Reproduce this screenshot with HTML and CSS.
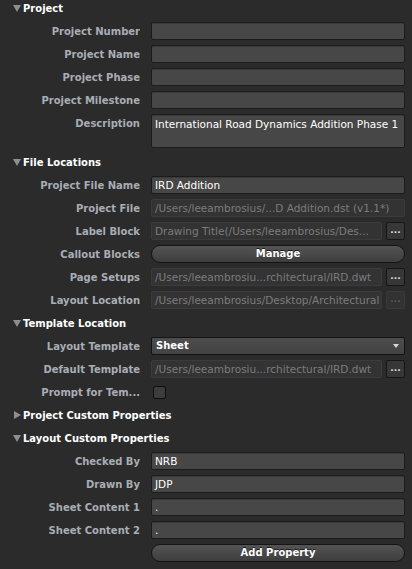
FILE: index.html
```html
<!DOCTYPE html>
<html>
<head>
<meta charset="utf-8">
<link rel="stylesheet" href="styles.css">
</head>
<body>
<div class="panel">
  <div class="sec-head first"><span class="tri down"></span>Project</div>
  <div class="row"><div class="lbl">Project Number</div><div class="field"></div></div>
  <div class="row"><div class="lbl">Project Name</div><div class="field"></div></div>
  <div class="row"><div class="lbl">Project Phase</div><div class="field"></div></div>
  <div class="row"><div class="lbl">Project Milestone</div><div class="field"></div></div>
  <div class="row top"><div class="lbl">Description</div><div class="field tall">International Road Dynamics Addition Phase 1</div></div>

  <div class="sec-head"><span class="tri down"></span>File Locations</div>
  <div class="row"><div class="lbl">Project File Name</div><div class="field">IRD Addition</div></div>
  <div class="row"><div class="lbl">Project File</div><div class="field off">/Users/leeambrosius/...D Addition.dst (v1.1*)</div></div>
  <div class="row"><div class="lbl">Label Block</div><div class="combo"><div class="field off">Drawing Title(/Users/leeambrosius/Des...</div><div class="dots">...</div></div></div>
  <div class="row"><div class="lbl">Callout Blocks</div><div class="pill">Manage</div></div>
  <div class="row"><div class="lbl">Page Setups</div><div class="combo"><div class="field off">/Users/leeambrosiu...rchitectural/IRD.dwt</div><div class="dots">...</div></div></div>
  <div class="row"><div class="lbl">Layout Location</div><div class="combo"><div class="field off">/Users/leeambrosius/Desktop/Architectural</div><div class="dots dim">...</div></div></div>

  <div class="sec-head"><span class="tri down"></span>Template Location</div>
  <div class="row"><div class="lbl">Layout Template</div><div class="select">Sheet<span class="caret"></span></div></div>
  <div class="row"><div class="lbl">Default Template</div><div class="combo"><div class="field off">/Users/leeambrosiu...rchitectural/IRD.dwt</div><div class="dots">...</div></div></div>
  <div class="row"><div class="lbl">Prompt for Tem...</div><div class="check-cell"><span class="check"></span></div></div>

  <div class="sec-head"><span class="tri right"></span>Project Custom Properties</div>
  <div class="sec-head"><span class="tri down"></span>Layout Custom Properties</div>
  <div class="row"><div class="lbl">Checked By</div><div class="field">NRB</div></div>
  <div class="row"><div class="lbl">Drawn By</div><div class="field">JDP</div></div>
  <div class="row"><div class="lbl">Sheet Content 1</div><div class="field">.</div></div>
  <div class="row"><div class="lbl">Sheet Content 2</div><div class="field">.</div></div>
  <div class="row"><div class="lbl"></div><div class="pill">Add Property</div></div>
</div>
</body>
</html>
```

FILE: styles.css
```css
* { box-sizing: border-box; }
html, body {
  margin: 0;
  padding: 0;
  background: #2b2b2b;
  width: 412px;
  height: 569px;
  overflow: hidden;
}
.panel {
  display: flex;
  flex-direction: column;
  gap: 5px;
  font-family: "DejaVu Sans", Verdana, sans-serif;
  font-size: 10px;
}
.sec-head {
  height: 18px;
  display: flex;
  align-items: center;
  padding-left: 13px;
  color: #ffffff;
  font-weight: bold;
  font-size: 10px;
}
.sec-head.first { height: 17px; }
.tri {
  display: inline-block;
  width: 0;
  height: 0;
  margin-right: 2px;
}
.tri.down {
  border-left: 4px solid transparent;
  border-right: 4px solid transparent;
  border-top: 7px solid #8e8e8e;
}
.tri.right {
  border-top: 4px solid transparent;
  border-bottom: 4px solid transparent;
  border-left: 7px solid #8e8e8e;
  margin-left: 1px;
  margin-right: 2px;
}
.row {
  display: grid;
  grid-template-columns: 140px 1fr;
  column-gap: 11px;
  padding-right: 7px;
  align-items: center;
}
.row.top { align-items: start; }
.row.top .lbl { line-height: 18px; padding-top: 1px; }
.lbl {
  text-align: right;
  color: #a9adb5;
  font-weight: bold;
  white-space: nowrap;
  overflow: hidden;
}
.field {
  height: 18px;
  background: #474747;
  border: 1px solid #1c1c1c;
  border-radius: 2px;
  box-shadow: inset 0 1px 0 #3a3a3a;
  color: #ffffff;
  font-size: 10.5px;
  line-height: 16px;
  padding: 0 3px;
  white-space: nowrap;
  overflow: hidden;
}
.field.tall { height: 34px; padding-top: 1px; }
.field.off {
  background: #333333;
  border-color: #3b3b3b;
  box-shadow: none;
  color: #7c7c7c;
}
.combo {
  display: grid;
  grid-template-columns: 1fr 19px;
  column-gap: 4px;
}
.dots {
  height: 18px;
  background: #373737;
  border: 1px solid #161616;
  border-radius: 2px;
  color: #e0e0e0;
  font-size: 9px;
  line-height: 15px;
  text-align: center;
  font-weight: bold;
}
.dots.dim {
  background: #323232;
  border-color: #3a3a3a;
  color: #5a5a5a;
}
.pill {
  height: 18px;
  border: 1px solid #141414;
  border-radius: 9px;
  background: linear-gradient(#545454, #3e3e3e);
  color: #ffffff;
  font-weight: bold;
  text-align: center;
  line-height: 16px;
  text-shadow: 0 -1px 0 #1a1a1a;
}
.select {
  position: relative;
  height: 18px;
  background: linear-gradient(#4d4d4d, #434343);
  border: 1px solid #141414;
  border-radius: 2px;
  color: #ffffff;
  font-weight: bold;
  line-height: 16px;
  padding: 0 4px;
}
.caret {
  position: absolute;
  right: 5px;
  top: 6px;
  width: 0;
  height: 0;
  border-left: 3px solid transparent;
  border-right: 3px solid transparent;
  border-top: 4px solid #d8d8d8;
}
.check-cell {
  height: 18px;
  display: flex;
  align-items: center;
  padding-left: 2px;
}
.check {
  width: 13px;
  height: 13px;
  background: #3c3c3c;
  border: 1px solid #0e0e0e;
  border-radius: 2px;
}
```
